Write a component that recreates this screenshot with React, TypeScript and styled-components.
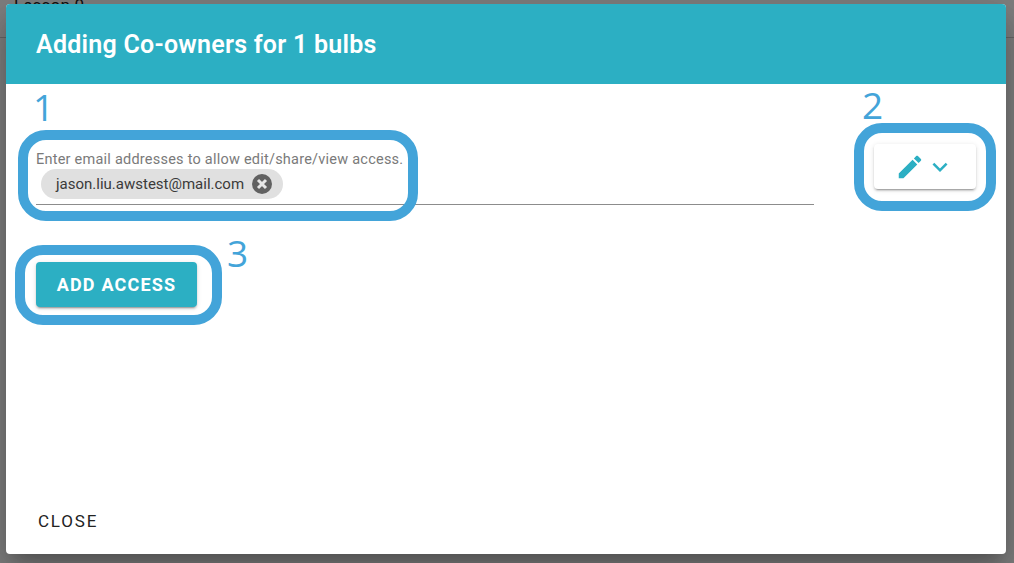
import React from "react";
import styled, { createGlobalStyle } from "styled-components";

const Global = createGlobalStyle`
  html, body { margin: 0; padding: 0; height: 100%; overflow: hidden; }
  body { font-family: Roboto, "Liberation Sans", sans-serif; background: #fff; }
`;

const Page = styled.div`
  position: relative;
  width: 1014px;
  height: 563px;
  overflow: hidden;
`;

const LessonBar = styled.div`
  height: 38px;
  box-sizing: border-box;
  border-bottom: 1px solid #ccc;
  padding: 0 14px;
  font-size: 17px;
  line-height: 10px;
  letter-spacing: 0.2px;
  color: #222;
`;

const Backdrop = styled.div`
  position: absolute;
  inset: 0;
  background: rgba(0, 0, 0, 0.5);
  display: flex;
  box-sizing: border-box;
  padding: 4px 8px 9px 6px;
`;

const Dialog = styled.div`
  position: relative;
  flex: 1;
  display: flex;
  flex-direction: column;
  background: #fff;
  border-radius: 4px;
  overflow: hidden;
  box-shadow: 0 11px 15px -7px rgba(0,0,0,.2), 0 24px 38px 3px rgba(0,0,0,.14), 0 9px 46px 8px rgba(0,0,0,.12);
`;

const Header = styled.h2`
  margin: 0;
  height: 80px;
  flex: none;
  display: flex;
  align-items: center;
  padding-left: 30px;
  background: #2cafc3;
  color: #fff;
  font-size: 25px;
  font-weight: 600;
  letter-spacing: 0.25px;
`;

const Body = styled.div`
  flex: 1;
  padding: 60px 30px 0;
  display: flex;
  flex-direction: column;
`;

const AccessRow = styled.div`
  display: flex;
  align-items: flex-start;
  justify-content: space-between;
  height: 118px;
`;

const Field = styled.div`
  width: 778px;
  height: 61px;
  box-sizing: border-box;
  border-bottom: 1px solid #8c8c8c;
`;

const FieldLabel = styled.div`
  font-size: 14.5px;
  line-height: 16px;
  letter-spacing: 0.23px;
  color: #7a7a7a;
  padding-top: 8px;
`;

const Chip = styled.div`
  display: inline-flex;
  align-items: center;
  height: 30px;
  margin: 1px 0 0 5px;
  padding: 0 0 0 15px;
  width: 242px;
  box-sizing: border-box;
  border-radius: 15px;
  background: #e0e0e0;
  color: #3a3a3a;
  font-size: 15px;
  gap: 7px;
  white-space: nowrap;
`;

const ChipDelete = styled.svg`
  width: 24px;
  height: 24px;
  flex: none;
  margin-left: -1px;
  circle { fill: #616161; }
  path { fill: none; stroke: #e6e6e6; stroke-width: 3; }
`;

const PermissionButton = styled.button`
  width: 102px;
  height: 45px;
  border: 0;
  border-radius: 4px;
  background: #fff;
  box-shadow: 0 3px 1px -2px rgba(0,0,0,.2), 0 2px 2px 0 rgba(0,0,0,.14), 0 1px 5px 0 rgba(0,0,0,.12);
  display: flex;
  align-items: center;
  justify-content: center;
  padding: 0;
`;

const ButtonIcon = styled.svg`
  width: 30px;
  height: 30px;
  fill: #2cafc3;
  flex: none;
`;

const AddButton = styled.button`
  width: 161px;
  height: 45px;
  border: 0;
  border-radius: 4px;
  background: #2cafc3;
  color: #fff;
  font-family: inherit;
  font-size: 18px;
  font-weight: 700;
  letter-spacing: 1.2px;
  box-shadow: 0 3px 1px -2px rgba(0,0,0,.2), 0 2px 2px 0 rgba(0,0,0,.14), 0 1px 5px 0 rgba(0,0,0,.12);
  padding: 0;
`;

const Footer = styled.div`
  flex: none;
  padding: 0 0 23px 32px;
`;

const CloseButton = styled.button`
  border: 0;
  background: none;
  padding: 0;
  color: #222;
  font-family: inherit;
  font-size: 17px;
  font-weight: 400;
  line-height: 19px;
  letter-spacing: 1.8px;
`;

const Callout = styled.div<{ $x: number; $y: number; $w: number; $h: number }>`
  position: absolute;
  left: ${(p) => p.$x}px;
  top: ${(p) => p.$y}px;
  width: ${(p) => p.$w}px;
  height: ${(p) => p.$h}px;
  box-sizing: border-box;
  border: 10px solid #43a4d9;
  border-radius: 28px;
  pointer-events: none;
`;

const CalloutNumber = styled.span<{ $x: number; $y: number }>`
  position: absolute;
  left: ${(p) => p.$x}px;
  top: ${(p) => p.$y}px;
  font-family: "Open Sans", sans-serif;
  font-weight: 400;
  font-size: 37px;
  line-height: 40px;
  color: #43a4d9;
`;

export default function App() {
  return (
    <Page>
      <Global />
      <LessonBar>Lesson 0</LessonBar>
      <Backdrop>
        <Dialog>
          <Header>Adding Co-owners for 1 bulbs</Header>
          <Body>
            <AccessRow>
              <Field>
                <FieldLabel>Enter email addresses to allow edit/share/view access.</FieldLabel>
                <Chip>
                  jason.liu.awstest@mail.com
                  <ChipDelete viewBox="0 0 24 24">
                    <circle cx="12" cy="12" r="10" />
                    <path d="M8 8l8 8M16 8l-8 8" />
                  </ChipDelete>
                </Chip>
              </Field>
              <PermissionButton aria-label="Permission">
                <ButtonIcon viewBox="0 0 24 24">
                  <path d="M3 17.25V21h3.75L17.81 9.94l-3.75-3.75L3 17.25zM20.71 7.04c.39-.39.39-1.02 0-1.41l-2.34-2.34c-.39-.39-1.02-.39-1.41 0l-1.83 1.83 3.75 3.75 1.83-1.83z" />
                </ButtonIcon>
                <ButtonIcon viewBox="0 0 24 24">
                  <path d="M16.59 8.59L12 13.17 7.41 8.59 6 10l6 6 6-6z" />
                </ButtonIcon>
              </PermissionButton>
            </AccessRow>
            <div>
              <AddButton>ADD ACCESS</AddButton>
            </div>
          </Body>
          <Footer>
            <CloseButton>CLOSE</CloseButton>
          </Footer>
        </Dialog>
      </Backdrop>
      <Callout $x={18} $y={130} $w={400} $h={91} />
      <Callout $x={854} $y={123} $w={142} $h={88} />
      <Callout $x={15} $y={245} $w={207} $h={80} />
      <CalloutNumber $x={33} $y={87}>1</CalloutNumber>
      <CalloutNumber $x={862} $y={85}>2</CalloutNumber>
      <CalloutNumber $x={227} $y={233}>3</CalloutNumber>
    </Page>
  );
}
